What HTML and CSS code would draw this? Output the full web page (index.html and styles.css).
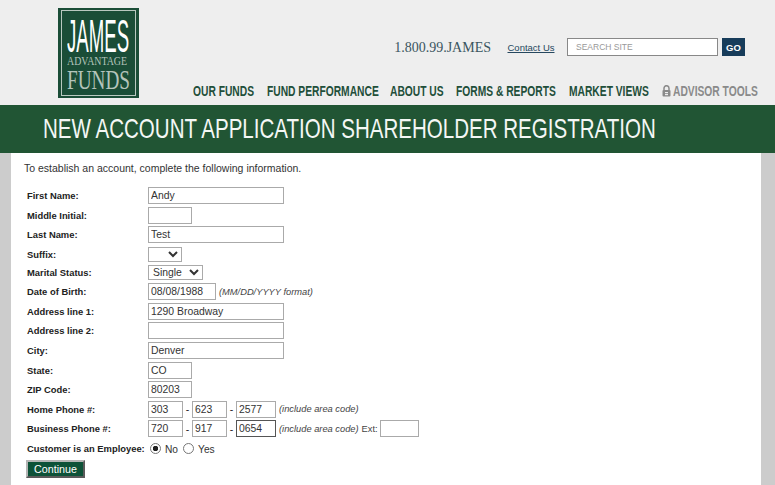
FILE: index.html
```html
<!DOCTYPE html>
<html lang="en">
<head>
<meta charset="utf-8">
<title>New Account Application</title>
<link rel="stylesheet" href="styles.css">
</head>
<body>
<header class="header">
  <div class="logo-wrap">
    <div class="logo">
      <div class="logo-frame">
        <div class="logo-james"><span>JAMES</span></div>
        <div class="logo-adv"><span>ADVANTAGE</span></div>
        <div class="logo-funds"><span>FUNDS</span></div>
      </div>
    </div>
  </div>
  <div class="header-right">
    <div class="util">
      <span class="phone">1.800.99.JAMES</span>
      <a class="contact" href="#">Contact Us</a>
      <div class="search"><input class="search-input" type="text" placeholder="SEARCH SITE"><button class="go" type="button">GO</button></div>
    </div>
    <nav class="nav">
      <a href="#"><span>OUR FUNDS</span></a>
      <a href="#"><span>FUND PERFORMANCE</span></a>
      <a href="#"><span>ABOUT US</span></a>
      <a href="#"><span>FORMS &amp; REPORTS</span></a>
      <a href="#"><span>MARKET VIEWS</span></a>
      <a href="#" class="locked"><svg class="lock" width="9" height="12" viewBox="0 0 9 12"><path d="M2 5V3.2a2.5 2.5 0 0 1 5 0V5" fill="none" stroke="#8a8a8a" stroke-width="1.5"/><rect x="0.5" y="5" width="8" height="6.5" rx="1" fill="#8a8a8a"/><rect x="3" y="7" width="3" height="1.2" fill="#eee"/><rect x="3" y="9" width="3" height="1.2" fill="#eee"/></svg><span>ADVISOR TOOLS</span></a>
    </nav>
  </div>
</header>
<div class="band"><h1><span>NEW ACCOUNT APPLICATION SHAREHOLDER REGISTRATION</span></h1></div>
<main class="content">
  <p class="intro">To establish an account, complete the following information.</p>
  <form class="form">
    <div class="row"><label>First Name:</label><input class="w136" type="text" value="Andy"></div>
    <div class="row"><label>Middle Initial:</label><input class="w44" type="text"></div>
    <div class="row"><label>Last Name:</label><input class="w136" type="text" value="Test"></div>
    <div class="row row-select"><label>Suffix:</label><select class="w34"><option></option></select></div>
    <div class="row row-select"><label>Marital Status:</label><select class="w55"><option>Single</option></select></div>
    <div class="row"><label>Date of Birth:</label><input class="w68" type="text" value="08/08/1988"><em class="hint">(MM/DD/YYYY format)</em></div>
    <div class="row"><label>Address line 1:</label><input class="w136" type="text" value="1290 Broadway"></div>
    <div class="row"><label>Address line 2:</label><input class="w136" type="text"></div>
    <div class="row"><label>City:</label><input class="w136" type="text" value="Denver"></div>
    <div class="row"><label>State:</label><input class="w44" type="text" value="CO"></div>
    <div class="row"><label>ZIP Code:</label><input class="w44" type="text" value="80203"></div>
    <div class="row"><label>Home Phone #:</label><input class="w35" type="text" value="303"><span class="dash">-</span><input class="w35" type="text" value="623"><span class="dash">-</span><input class="w40" type="text" value="2577"><em class="hint">(include area code)</em></div>
    <div class="row"><label>Business Phone #:</label><input class="w35" type="text" value="720"><span class="dash">-</span><input class="w35" type="text" value="917"><span class="dash">-</span><input class="w40 focus" type="text" value="0654"><em class="hint">(include area code)</em><span class="ext">Ext:</span><input class="w39" type="text"></div>
    <div class="row"><label>Customer is an Employee:</label><span class="radios"><input type="radio" name="emp" checked><span class="r-label">No</span><input type="radio" name="emp"><span class="r-label">Yes</span></span></div>
    <div class="actions"><button class="continue" type="button">Continue</button></div>
  </form>
</main>
</body>
</html>
```
FILE: styles.css
```css
* { box-sizing: border-box; }
html, body { margin: 0; padding: 0; }
body {
  width: 775px; height: 485px; overflow: hidden;
  background: #ccc;
  font-family: "Liberation Sans", Arial, sans-serif;
}
.header { height: 105px; background: #eee; display: flex; }
.logo-wrap { padding: 8px 0 0 58px; width: 139px; flex: none; }
.logo { width: 81px; height: 90px; background: #1a4d37; padding: 2px 3px; }
.logo-frame { height: 86px; border: 1px solid #b9c8c0; padding: 8px 0 0 5px; overflow: hidden; white-space: nowrap; }
.logo-frame span { display: inline-block; transform-origin: left center; }
.logo-james { font: 400 46px/34px "Liberation Sans", sans-serif; color: #fff; }
.logo-james span { transform: scaleX(0.405); }
.logo-adv { font: 400 13.5px/12px "Liberation Serif", serif; color: #b4c4bb; margin-top: 2.3px; }
.logo-adv span { transform: scaleX(0.732); }
.logo-funds { font: 400 27px/20px "Liberation Serif", serif; color: #b4c4bb; margin-top: 2.5px; }
.logo-funds span { transform: scaleX(0.712); }
.header-right { flex: 1; display: flex; flex-direction: column; align-items: flex-end; padding-right: 18px; }
.util { display: flex; align-items: center; margin: 38px 12px 0 0; height: 18px; }
.phone { font: 14px "Liberation Serif", serif; color: #3a5560; margin: 2px 16.5px 0 0; }
.contact { font-size: 9.5px; color: #26485f; margin-right: 12.5px; }
.search { display: flex; align-items: center; }
.search-input { width: 151px; height: 18px; border: 1px solid #888; background: #fff; padding: 0 8px; font: 8.5px "Liberation Sans", sans-serif; border-radius: 0; }
.search-input::placeholder { color: #999; opacity: 1; }
.go { width: 23px; height: 18px; margin-left: 4px; padding: 0; border: 0; background: #173c5a; color: #fff; font: 700 9.5px "Liberation Sans", sans-serif; }
.nav { display: grid; grid-template-columns: 74px 123px 66px 113px 93px 95px; margin-top: 27px; }
.nav a { font: 700 14px/16px "Liberation Sans", sans-serif; color: #1f4f3a; text-decoration: none; white-space: nowrap; display: block; }
.nav span { display: inline-block; transform: scaleX(0.733); transform-origin: left center; }
.nav a.locked { color: #8a8a8a; display: flex; align-items: center; gap: 2px; }
.lock { flex: none; }
.nav a.locked span { flex: none; width: 84px; }
.band { height: 48px; background: #215534; padding-left: 43px; display: flex; align-items: center; }
.band h1 { margin: 0; width: 620px; flex: none; font: 400 28px "Liberation Sans", sans-serif; color: #f4f7f5; white-space: nowrap; }
.band span { display: inline-block; width: 620px; transform: scaleX(0.7335); transform-origin: left center; }
.content { margin: 0 14px 0 11px; background: #fff; height: 332px; padding: 9px 0 0 13px; }
.intro { margin: 0 0 11px; font-size: 10.5px; line-height: 13px; color: #333; }
.form { padding-left: 3px; }
.row { display: flex; align-items: center; height: 19.6px; font-size: 10.5px; color: #222; }
.row-select { height: 18.6px; }
.row label { width: 121px; flex: none; font-weight: 700; font-size: 9.4px; color: #222; white-space: nowrap; }
.row input[type=text] { height: 17px; border: 1px solid #aaa; padding: 0 2px; background: #fff; font: 10.4px "Liberation Sans", sans-serif; color: #333; border-radius: 0; outline: 0; flex: none; }
.row input.focus { border-color: #555; }
.row select { height: 15px; border: 1px solid #aaa; background: #fff; font: 10.4px "Liberation Sans", sans-serif; color: #333; padding: 0; border-radius: 0; flex: none; }
.w136 { width: 136px; }
.w68 { width: 68px; }
.w44 { width: 44px; }
.w40 { width: 40px; }
.w39 { width: 39px; }
.w35 { width: 35px; }
.w34 { width: 34px; }
.w55 { width: 55px; }
.dash { width: 9px; text-align: center; flex: none; }
.hint { margin-left: 3px; font-size: 9.3px; color: #444; white-space: nowrap; }
.ext { margin: 0 2px 0 3px; font-size: 9.3px; color: #444; white-space: nowrap; }
.radios { display: flex; align-items: center; margin-left: 2px; }
.radios input { appearance: none; margin: 0; width: 11px; height: 11px; flex: none; border: 1px solid #777; border-radius: 50%; background: #fff; }
.radios input:checked { background: radial-gradient(circle, #222 0 2.5px, #fff 3px); }
.r-label { margin: 2px 5px 0 4px; font-size: 10.2px; color: #333; }
.actions { margin: 1px 0 0 -1px; }
.continue { width: 59px; height: 18px; padding: 0; background: #0d5238; color: #fff; border-width: 2px; border-style: solid; border-color: #b5b5b5 #5a5a5a #5a5a5a #b5b5b5; font: 10.7px "Liberation Sans", sans-serif; border-radius: 0; }
```
